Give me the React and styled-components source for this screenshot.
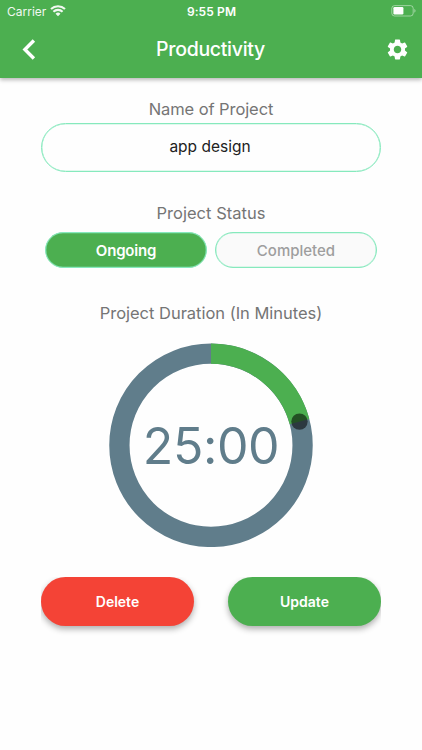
import React, { useState } from 'react';
import styled, { createGlobalStyle } from 'styled-components';
import { MdSettings } from 'react-icons/md';

const GREEN = '#4caf50';
const RED = '#f44336';
const SLATE = '#607d8b';
const MINT = '#86e9bd';

// the dial covers two hours
const DIAL_MINUTES = 120;

export default function App() {
    const [name, setName] = useState('app design');
    const [status, setStatus] = useState('Ongoing');

    return (
        <>
            <GlobalStyle />
            <Screen>
                <Header>
                    <StatusBar>
                        <Carrier>
                            Carrier
                            <WifiIcon />
                        </Carrier>
                        <Clock>9:55 PM</Clock>
                        <BatteryIcon />
                    </StatusBar>
                    <Toolbar>
                        <IconButton aria-label="Back">
                            <BackIcon />
                        </IconButton>
                        <Title>Productivity</Title>
                        <IconButton aria-label="Settings" $end>
                            <MdSettings size={25} />
                        </IconButton>
                    </Toolbar>
                </Header>

                <Content>
                    <Label $spacing="-0.08px">Name of Project</Label>
                    <NameInput
                        aria-label="Name of Project"
                        value={name}
                        onChange={(e) => setName(e.target.value)}
                    />

                    <Label $top="30px" $spacing="0.04px">Project Status</Label>
                    <StatusRow>
                        {['Ongoing', 'Completed'].map((item) => (
                            <StatusButton
                                key={item}
                                $active={status === item}
                                onClick={() => setStatus(item)}
                            >
                                {item}
                            </StatusButton>
                        ))}
                    </StatusRow>

                    <Label $top="34px" $spacing="-0.02px">Project Duration (In Minutes)</Label>
                    <Dial minutes={25} />

                    <Actions>
                        <ActionButton $color={RED}>Delete</ActionButton>
                        <ActionButton $color={GREEN}>Update</ActionButton>
                    </Actions>
                </Content>
            </Screen>
        </>
    )
}

function Dial({ minutes }) {
    const center = 102;
    const centerY = 102.3;
    const radius = 91.6;
    const angle = (minutes / DIAL_MINUTES) * 2 * Math.PI;
    const x = center + radius * Math.sin(angle);
    const y = centerY - radius * Math.cos(angle);

    return (
        <DialBox>
            <svg width="204" height="204" viewBox="0 0 204 204">
                <circle cx={center} cy={centerY} r={radius} fill="none" stroke={SLATE} strokeWidth="20.3" />
                <path
                    d={`M${center} ${centerY - radius}A${radius} ${radius} 0 0 1 ${x} ${y}`}
                    fill="none"
                    stroke={GREEN}
                    strokeWidth="20.3"
                />
                <circle cx={x} cy={y} r="8.2" fill="#000" fillOpacity="0.54" />
            </svg>
            <Time>{minutes}:00</Time>
        </DialBox>
    )
}

function BackIcon() {
    return (
        <svg width="14" height="21" viewBox="0 0 14 21">
            <path d="M11.9 1.5L2.9 10.5l9 9" fill="none" stroke="#fff" strokeWidth="3.4" />
        </svg>
    )
}

function WifiIcon() {
    return (
        <svg width="16" height="12" viewBox="0 0 16 12">
            <path d="M1 4.1a10.1 10.1 0 0 1 14 0M3.4 6.7a6.6 6.6 0 0 1 9.2 0" fill="none" stroke="#fff" strokeWidth="2.1" />
            <path d="M5.5 8.8a3.6 3.6 0 0 1 5 0L8 11.3z" fill="#fff" />
        </svg>
    )
}

function BatteryIcon() {
    return (
        <svg width="25" height="12" viewBox="0 0 25 12">
            <rect x="0.8" y="0.6" width="21.4" height="10.4" rx="2.8" fill="none" stroke="#fff" strokeOpacity="0.45" />
            <rect x="2.4" y="2.1" width="10" height="7.4" rx="1.2" fill="#fff" />
            <path d="M23.4 4v3.7c.7-.3 1.1-1 1.1-1.85S24.1 4.3 23.4 4z" fill="#fff" fillOpacity="0.5" />
        </svg>
    )
}

const GlobalStyle = createGlobalStyle`
    * {
        box-sizing: border-box;
    }

    body {
        margin: 0;
        background: #fefefe;
        font-family: Inter, Roboto, sans-serif;
    }

    button, input {
        font-family: inherit;
        margin: 0;
    }
`

const Screen = styled.div`
    width: 422px;
    height: 750px;
    background: #fefefe;
    overflow: hidden;
`

const Header = styled.header`
    height: 78px;
    background: ${GREEN};
    color: #fff;
    box-shadow: 0 2px 4px rgba(0, 0, 0, 0.28);
`

const StatusBar = styled.div`
    display: grid;
    grid-template-columns: 1fr auto 1fr;
    align-items: center;
    height: 22px;
    padding: 0 6px 0 7px;

    > svg {
        justify-self: end;
    }
`

const Carrier = styled.span`
    display: flex;
    align-items: center;
    gap: 4px;
    font-size: 12px;
    opacity: 0.92;

    svg {
        margin-top: -1px;
    }
`

const Clock = styled.span`
    font-size: 12px;
    font-weight: 600;
    letter-spacing: 0.1px;
`

const Toolbar = styled.div`
    display: grid;
    grid-template-columns: 50px 1fr 50px;
    align-items: center;
    height: 54px;
    padding: 0 12px 0 22px;
`

const IconButton = styled.button`
    display: flex;
    justify-content: ${(p) => (p.$end ? 'flex-end' : 'flex-start')};
    padding: 0;
    border: 0;
    background: none;
    color: #fff;
`

const Title = styled.h1`
    margin: 0 11px 0 0;
    font-size: 19.5px;
    font-weight: 500;
    line-height: 24px;
    letter-spacing: -0.3px;
    text-align: center;
`

const Content = styled.main`
    display: flex;
    flex-direction: column;
    padding: 20px 41px 0;
`

const Label = styled.div`
    margin-top: ${(p) => p.$top || 0};
    font-size: 16.5px;
    line-height: 22px;
    letter-spacing: ${(p) => p.$spacing};
    color: #757575;
    text-align: center;
`

const NameInput = styled.input`
    width: 100%;
    height: 49px;
    margin-top: 3.4px;
    padding: 0 22px 2px 20px;
    border: 1px solid ${MINT};
    border-radius: 25px;
    outline: 0;
    background: transparent;
    box-shadow: inset 0 0 0 0.3px ${MINT};
    color: #212121;
    font-size: 15.5px;
    letter-spacing: 0;
    text-align: center;
`

const StatusRow = styled.div`
    display: flex;
    gap: 8px;
    margin-top: 8px;
    padding: 0 4px;
`

const StatusButton = styled.button`
    flex: 1;
    height: 36px;
    padding: 0;
    border: 1px solid ${MINT};
    border-radius: 18px;
    background: ${(p) => (p.$active ? GREEN : '#fafafa')};
    box-shadow: inset 0 0 0 0.3px ${MINT};
    color: ${(p) => (p.$active ? '#fff' : '#9e9e9e')};
    font-size: 15px;
    font-weight: ${(p) => (p.$active ? 600 : 500)};
    letter-spacing: ${(p) => (p.$active ? '-0.2px' : '0')};
`

const DialBox = styled.div`
    display: grid;
    place-items: center;
    align-self: center;
    margin-top: 19px;

    > * {
        grid-area: 1 / 1;
    }
`

const Time = styled.span`
    padding-top: 2px;
    font-size: 50px;
    font-weight: 370;
    line-height: 60px;
    letter-spacing: -0.4px;
    color: ${SLATE};
`

// cuts the button shadows off at the sides of the column
const Actions = styled.div`
    display: flex;
    justify-content: space-between;
    margin-top: 30px;
    padding-bottom: 14px;
    overflow: hidden;
`

const ActionButton = styled.button`
    width: 153px;
    height: 49px;
    padding: 0;
    border: 0;
    border-radius: 25px;
    background: ${(p) => p.$color};
    box-shadow: 0 3px 6px rgba(0, 0, 0, 0.32);
    color: #fff;
    font-size: 14px;
    font-weight: 600;
    letter-spacing: 0;
`
